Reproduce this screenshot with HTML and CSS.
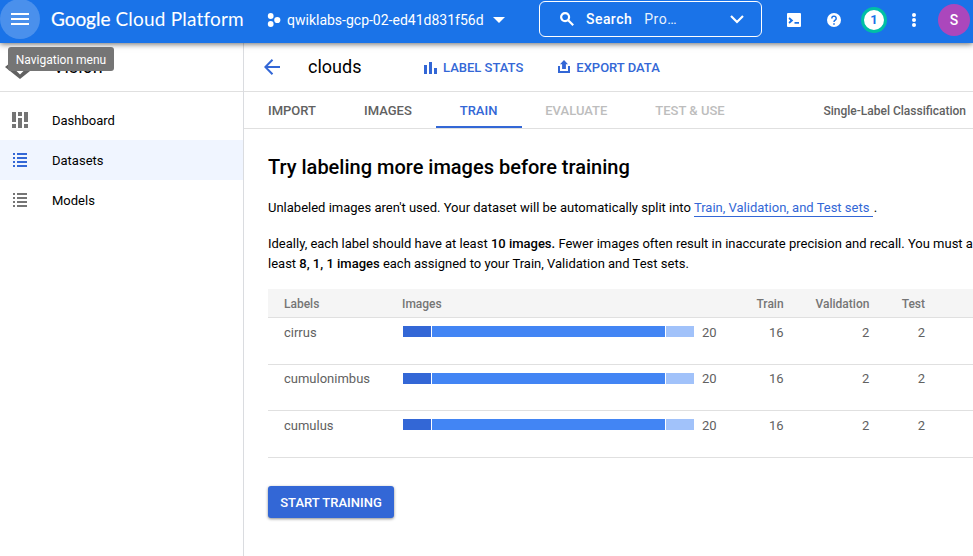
FILE: index.html
```html
<!DOCTYPE html>
<html lang="en">
<head>
<meta charset="utf-8">
<title>Vision – clouds</title>
<link rel="stylesheet" href="styles.css">
</head>
<body>
<header class="topbar">
  <button class="menu" aria-label="Navigation menu"><svg width="18" height="12" viewBox="0 0 18 12"><path d="M0 0h18v2H0zM0 5h18v2H0zM0 10h18v2H0z"/></svg></button>
  <div class="brand"><span class="brand-google">Google</span> <span class="brand-cloud">Cloud Platform</span></div>
  <div class="project">
    <svg width="14" height="14" viewBox="0 0 14 14"><circle cx="3.7" cy="3" r="2.9"/><circle cx="10.3" cy="7" r="3.1"/><circle cx="3.7" cy="11" r="2.9"/></svg>
    <span class="project-name">qwiklabs-gcp-02-ed41d831f56d</span>
    <svg width="12" height="6" viewBox="0 0 12 6"><path d="M0 0h12L6 6z"/></svg>
  </div>
  <div class="search">
    <svg class="search-icon" width="14" height="14" viewBox="0 0 14 14"><circle cx="5.1" cy="5.1" r="4" class="line"/><path d="M8 8l5.2 5.2" class="line"/></svg>
    <strong>Search</strong><span class="search-hint">Pro…</span>
    <svg class="search-caret" width="14" height="9" viewBox="0 0 14 9"><path d="M1 1l6 6 6-6" class="line"/></svg>
  </div>
  <svg class="shell" width="14" height="14" viewBox="0 0 14 14"><path fill-rule="evenodd" d="M1 0h12a1 1 0 0 1 1 1v12a1 1 0 0 1-1 1H1a1 1 0 0 1-1-1V1a1 1 0 0 1 1-1zM1.500 5.800L3.300 7.500 1.500 9.200 2.600 10.700 6.300 7.500 2.600 4.300zM7.500 9v1.700h4.500V9z"/></svg>
  <svg class="help" width="14" height="14" viewBox="0 0 14 14"><circle cx="7" cy="7" r="7"/><path class="q" d="M4.800 5.400a2.200 2.200 0 1 1 3.400 1.800C7.400 7.700 7 8 7 9"/><path class="dot" d="M6.200 10.200h1.600v1.600H6.200z"/></svg>
  <div class="notice">1</div>
  <svg class="more" width="4" height="14" viewBox="0 0 4 14"><circle cx="2" cy="2" r="2"/><circle cx="2" cy="7" r="2"/><circle cx="2" cy="12" r="2"/></svg>
  <div class="avatar">S</div>
</header>
<div class="tooltip">Navigation menu</div>
<div class="app">
  <nav class="sidebar">
    <div class="product">
      <svg width="30" height="24" viewBox="0 0 30 24"><path d="M0 12L15 0l15 12-15 12z" fill="#616161"/><path d="M9.500 14l5.500-5.500 5.500 5.500-5.500 5.500z" fill="#fff"/></svg>
      <span>Vision</span>
    </div>
    <ul>
      <li><svg width="16" height="16" viewBox="0 0 16 16"><path d="M0 0h4v10H0zM0 12h4v4H0zM6 0h4v4H6zM6 6h4v10H6zM12 0h4v10h-4zM12 12h4v4h-4z"/></svg><span>Dashboard</span></li>
      <li class="selected"><svg width="16" height="16" viewBox="0 0 16 16"><path d="M1 1h2v2H1zM5 1h10v2H5zM1 5h2v2H1zM5 5h10v2H5zM1 9h2v2H1zM5 9h10v2H5zM1 13h2v2H1zM5 13h10v2H5z"/></svg><span>Datasets</span></li>
      <li><svg width="16" height="16" viewBox="0 0 16 16"><path d="M1 1h2v2H1zM5 1h10v2H5zM1 5h2v2H1zM5 5h10v2H5zM1 9h2v2H1zM5 9h10v2H5zM1 13h2v2H1zM5 13h10v2H5z"/></svg><span>Models</span></li>
    </ul>
  </nav>
  <main>
    <div class="titlebar">
      <svg class="back" width="16" height="16" viewBox="0 0 16 16"><path d="M16 8H1.500M8.500 .8L1.300 8l7.200 7.200"/></svg>
      <h1>clouds</h1>
      <a class="action stats"><svg width="13" height="12" viewBox="0 0 13 12"><path d="M0 3h3v9H0zM5 0h3v12H5zM10 6h3v6h-3z"/></svg>LABEL STATS</a>
      <a class="action export"><svg width="12" height="13" viewBox="0 0 12 13"><path d="M6 0l4 4.300H7.900V9H4.100V4.300H2zM0 6h2v5h8V6h2v7H0z"/></svg>EXPORT DATA</a>
    </div>
    <div class="tabs">
      <a>IMPORT</a><a>IMAGES</a><a class="active">TRAIN</a><a class="disabled">EVALUATE</a><a class="disabled test">TEST &amp; USE</a>
      <span class="kind">Single-Label Classification</span>
    </div>
    <section class="content">
      <h2>Try labeling more images before training</h2>
      <p>Unlabeled images aren't used. Your dataset will be automatically split into <a class="link">Train, Validation, and Test sets </a><span class="stop"> .</span></p>
      <p class="ideal">Ideally, each label should have at least <b>10 images.</b> Fewer images often result in inaccurate precision and recall. You must a<br>least <b>8, 1, 1 images</b> each assigned to your Train, Validation and Test sets.</p>
      <div class="table">
        <div class="row head"><span>Labels</span><span class="img">Images</span><span class="num">Train</span><span class="num">Validation</span><span class="num">Test</span></div>
        <div class="row"><span>cirrus</span><span class="bars"><i class="dark"></i><i class="mid"></i><i class="light"></i><em>20</em></span><span class="num">16</span><span class="num">2</span><span class="num">2</span></div>
        <div class="row short"><span>cumulonimbus</span><span class="bars"><i class="dark"></i><i class="mid"></i><i class="light"></i><em>20</em></span><span class="num">16</span><span class="num">2</span><span class="num">2</span></div>
        <div class="row"><span>cumulus</span><span class="bars"><i class="dark"></i><i class="mid"></i><i class="light"></i><em>20</em></span><span class="num">16</span><span class="num">2</span><span class="num">2</span></div>
      </div>
      <button class="start">START TRAINING</button>
    </section>
  </main>
</div>
</body>
</html>
```
FILE: styles.css
```css
* { box-sizing: border-box; }
body { margin: 0; width: 973px; height: 556px; overflow: hidden; background: #fff; color: #000; font: 13px/20px Roboto, sans-serif; position: relative; }
svg { display: block; flex: none; fill: currentColor; }
button { border: 0; padding: 0; font: inherit; }
.line { fill: none; stroke: currentColor; stroke-width: 2.2; }

.topbar { position: relative; z-index: 2; height: 43px; background: #1a73e8; color: #fff; display: flex; align-items: center; padding-bottom: 4px; box-shadow: 0 1px 6px rgba(0,0,0,.6); }
.menu { width: 40px; height: 40px; margin-top: -1px; border-radius: 50%; background: #4a90ec; color: #fff; display: flex; align-items: center; justify-content: center; flex: none; }
.brand { width: 193px; margin-left: 11px; margin-top: -1px; font: 19px/24px Lato, sans-serif; white-space: nowrap; letter-spacing: .2px; }
.brand-google { letter-spacing: -.05px; -webkit-text-stroke: .2px #fff; }
.project { display: flex; align-items: center; width: 239px; margin-left: 23px; }
.project-name { font-size: 14px; margin: 1px 9px 0 6px; white-space: nowrap; }
.search { margin-left: 33px; margin-top: -1px; width: 223px; height: 36px; border: 1px solid #fff; border-radius: 6px; display: flex; align-items: center; font-size: 14px; flex: none; }
.search-icon { margin-left: 20px; }
.search strong { margin-left: 12px; font-weight: 500; letter-spacing: .45px; }
.search-hint { margin-left: 12px; letter-spacing: .6px; opacity: .9; }
.search-caret { margin-left: auto; margin-right: 17px; }
.shell { margin-left: 25px; }
.help { margin-left: 26px; }
.q { fill: none; stroke: #1a73e8; stroke-width: 1.5; }
.dot { fill: #1a73e8; }
.notice { width: 26px; height: 26px; margin-left: 20px; border: 3px solid #00bfa5; border-radius: 50%; background: #fff; color: #1a73e8; text-align: center; font-weight: 700; }
.more { margin-left: 25px; }
.avatar { width: 32px; height: 32px; margin-left: 22px; border-radius: 50%; background: #ab47bc; text-align: center; font: 500 14px/32px Roboto, sans-serif; flex: none; }
.tooltip { position: absolute; z-index: 3; left: 8px; top: 47px; width: 106px; height: 24px; border-radius: 3px; background: #757575; color: #fff; font-size: 12px; line-height: 26px; text-align: center; }

.app { display: flex; height: 513px; }
.sidebar { width: 244px; border-right: 1px solid #dadce0; flex: none; }
.product { height: 49px; border-bottom: 1px solid #e0e0e0; display: flex; align-items: center; padding-left: 5px; font-size: 18px; gap: 18px; }
.sidebar ul { list-style: none; margin: 8px 0 0; padding: 0; }
.sidebar li { display: flex; align-items: center; height: 40px; padding-left: 12px; gap: 24px; }
.sidebar li span { padding-top: 2px; }
.sidebar li svg { color: #757575; }
.selected { background: #f0f5ff; }
.sidebar .selected svg { color: #3367d6; }

main { width: 729px; flex: none; overflow: hidden; }
.titlebar { height: 49px; border-bottom: 1px solid #e0e0e0; display: flex; align-items: center; padding-left: 20px; }
.back { fill: none; stroke: #3367d6; stroke-width: 2; }
h1 { width: 116px; margin: 0 0 0 28px; font-size: 18px; font-weight: 400; }
.action { display: flex; align-items: center; padding-top: 2px; color: #3367d6; font-weight: 500; white-space: nowrap; }
.stats { gap: 6px; }
.export { gap: 6px; margin-left: 35px; }
.export svg { margin-top: -3px; }
.tabs { height: 37px; border-bottom: 1px solid #e0e0e0; display: flex; color: #616161; font-weight: 500; line-height: 38px; white-space: nowrap; }
.tabs a { padding: 0 24px; height: 36px; }
.tabs .active { width: 86px; color: #3367d6; border-bottom: 2px solid #3367d6; }
.tabs .active + a { padding-left: 23.5px; }
.tabs .disabled { color: #bdbdbd; }
.kind { margin-left: auto; margin-right: 7px; font-size: 12px; }
.content { padding: 25px 0 0 24px; white-space: nowrap; }
h2 { margin: 0; font-size: 20px; line-height: 26px; font-weight: 500; }
p { margin: 18px 0 0; }
.link { color: #3367d6; border-bottom: 1px solid #3367d6; padding-bottom: 1px; white-space: pre; }
.stop { margin-left: -2px; }
p.ideal { margin-top: 16px; }
b { font-weight: 500; }
.table { margin-top: 15px; color: #616161; }
.row { display: grid; grid-template-columns: 119px 292px 88.6px 85.8px 55.6px; padding: 5px 0 0 16px; height: 47px; border-bottom: 1px solid #e0e0e0; }
.head { height: 29px; padding-top: 5px; background: #f5f5f5; color: #757575; font-size: 12px; font-weight: 500; }
.img { margin-left: -1px; }
.num { text-align: right; }
.bars { display: flex; gap: 1px; padding-top: 3px; }
.bars i { height: 11px; flex: none; }
.dark { width: 28px; background: #3367d6; }
.mid { width: 233px; background: #4285f4; }
.light { width: 28px; background: #a1c2fa; }
.bars em { font-style: normal; margin: -3px 0 0 7px; }
.short { height: 46px; padding-top: 4px; }
.short .bars { padding-top: 4px; }
.short .bars em { margin-top: -4px; }
.start { display: block; width: 126px; height: 32px; margin-top: 28px; padding-top: 2px; border-radius: 3px; background: #3367d6; color: #fff; font-weight: 500; box-shadow: 0 1px 3px rgba(0,0,0,.45); }
```
